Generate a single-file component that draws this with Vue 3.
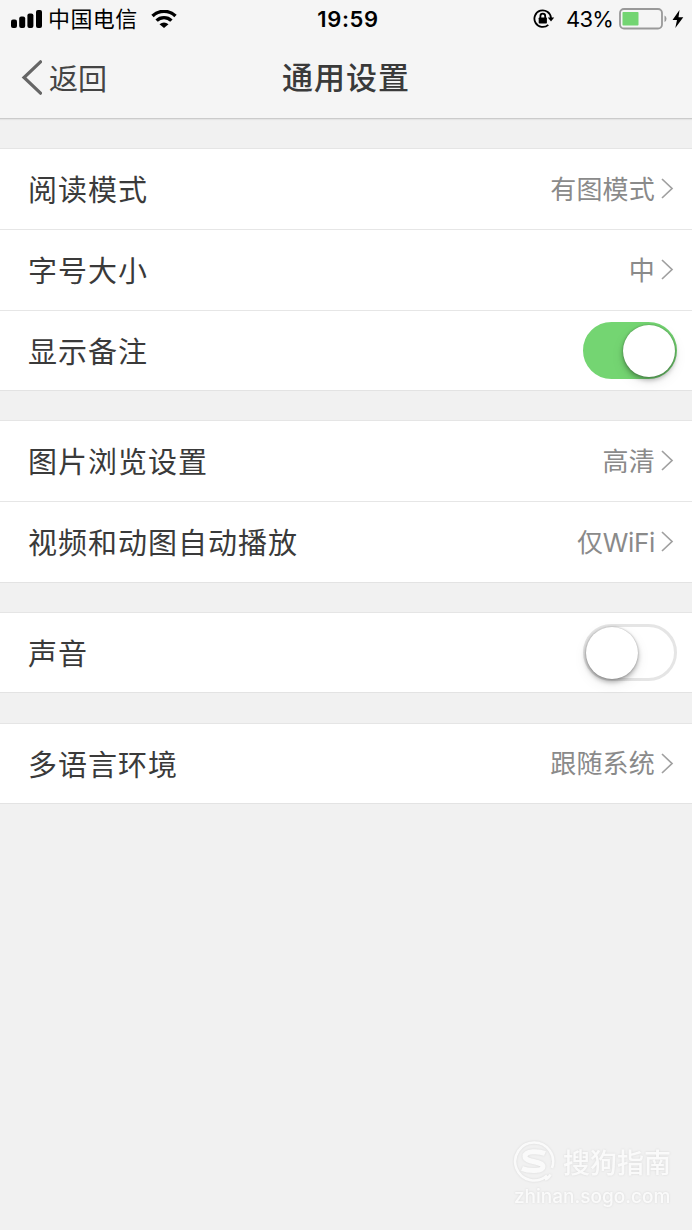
<script setup>
const groups = [
  {
    cls: 'g1',
    rows: [
      { label: '阅读模式', value: '有图模式' },
      { label: '字号大小', value: '中' },
      { label: '显示备注', toggle: true, on: true },
    ],
  },
  {
    cls: 'g2',
    rows: [
      { label: '图片浏览设置', value: '高清' },
      { label: '视频和动图自动播放', value: '仅WiFi', tight: true },
    ],
  },
  { cls: 'g3', rows: [{ label: '声音', toggle: true, on: false }] },
  { cls: 'g4', rows: [{ label: '多语言环境', value: '跟随系统' }] },
]
</script>

<template>
  <div class="screen">
    <header class="header">
      <div class="status">
        <div class="side">
          <svg class="signal" width="32" height="19" viewBox="0 0 32 19">
            <rect x="0" y="9.5" width="6" height="8.500" rx="2" />
            <rect x="8.200" y="6.500" width="6" height="11.500" rx="2" />
            <rect x="16.400" y="3.500" width="6" height="14.500" rx="2" />
            <rect x="25" y="0" width="6" height="18" rx="2" />
          </svg>
          <span class="carrier">中国电信</span>
          <svg class="wifi" width="26" height="19" viewBox="0 0 26 19">
            <path d="M1.500 6A16.500 16.500 0 0 1 24.500 6" />
            <path d="M5.600 10.600A10.600 10.600 0 0 1 20.400 10.600" />
            <path class="dot" d="M13 18L8.500 14.200Q13 10.600 17.500 14.200Z" />
          </svg>
        </div>
        <span class="time">19:59</span>
        <div class="side right">
          <svg class="lock" width="22" height="20" viewBox="0 0 22 20">
            <path class="ring" d="M18 9A8.300 8.300 0 1 0 15.300 15.800" />
            <path d="M14.800 8.500H21.200L18 12.600Z" />
            <rect x="5.700" y="8.500" width="8.200" height="6" rx="0.700" />
            <path class="shackle" d="M7.400 9V7A2.400 2.400 0 0 1 12.200 7V9" />
          </svg>
          <span class="percent">43%</span>
          <svg class="battery" width="48" height="22" viewBox="0 0 48 22">
            <rect class="shell" x="1" y="1" width="42" height="19.500" rx="4" />
            <rect class="charge" x="3.500" y="4" width="16" height="13.500" rx="0.800" />
            <path class="tip" d="M45.500 7.500Q47.500 8.300 47.500 10.700T45.500 14Z" />
          </svg>
          <svg class="bolt" width="12" height="18" viewBox="0 0 12 18">
            <path d="M7.500 0L0.500 10H5L3.300 18L11.300 7.200H6.500Z" />
          </svg>
        </div>
      </div>
      <nav class="nav">
        <div class="back">
          <svg width="22" height="36" viewBox="0 0 22 36">
            <path d="M20.500 1.800L4 17.500L20.500 33.200" />
          </svg>
          <span>返回</span>
        </div>
        <h1>通用设置</h1>
        <div></div>
      </nav>
    </header>

    <main>
      <section v-for="g in groups" :key="g.cls" class="group" :class="g.cls">
        <div v-for="r in g.rows" :key="r.label" class="row">
          <span class="label">{{ r.label }}</span>
          <span v-if="r.toggle" class="switch" :class="{ on: r.on }"><i></i></span>
          <span v-else class="value" :class="{ tight: r.tight }">
            <span>{{ r.value }}</span>
            <svg width="13" height="22" viewBox="0 0 13 22">
              <path d="M1 1L11 10.500L1 20" />
            </svg>
          </span>
        </div>
      </section>
    </main>

    <footer class="watermark">
      <div class="brand">
        <svg width="44" height="44" viewBox="0 0 44 44">
          <path class="thin" d="M35 35.500A19 19 0 1 1 40 28M33 39.500Q37 38 38.500 34.500" />
          <path class="swirl" d="M33 13.500C27 11 13 10.500 13 16.500S31 21 31 26.500S16 31 10 28.500" />
        </svg>
        <span>搜狗指南</span>
      </div>
      <div class="site">zhinan.sogo.com</div>
    </footer>
  </div>
</template>

<style>
body {
  background: #f1f1f1;
}
</style>

<style scoped>
.screen {
  box-sizing: border-box;
  width: 692px;
  height: 1230px;
  display: flex;
  flex-direction: column;
  overflow: hidden;
  background: #f1f1f1;
  color: #3a3a3a;
  font-family: "Noto Sans CJK SC", sans-serif;
}
.header {
  box-sizing: border-box;
  height: 119px;
  flex: none;
  background: #f5f5f5;
  border-bottom: 1px solid #cbcbcb;
  box-shadow: 0 1px 1px #e4e4e4;
}
.status {
  height: 38px;
  display: grid;
  grid-template-columns: 1fr auto 1fr;
  align-items: center;
  padding: 0 8px 0 11px;
  color: #000;
}
.side {
  display: flex;
  align-items: center;
}
.right {
  justify-content: flex-end;
}
.carrier {
  margin-left: 5px;
  padding-bottom: 3px;
  font-size: 22px;
  line-height: 35px;
  letter-spacing: 0.4px;
}
.wifi {
  margin-left: 13px;
}
.wifi path {
  fill: none;
  stroke: #000;
  stroke-width: 3.4;
}
.wifi .dot {
  fill: #000;
  stroke: none;
}
.time {
  padding-left: 1px;
  font: 600 22px/38px Inter, sans-serif;
  letter-spacing: 0.6px;
}
.ring,
.shackle {
  fill: none;
  stroke: #000;
  stroke-width: 1.8;
}
.percent {
  margin: 0 6px 0 11px;
  font: 400 22px/38px Inter, sans-serif;
  letter-spacing: -0.8px;
}
.shell {
  fill: none;
  stroke: #999;
  stroke-width: 1.8;
}
.charge {
  fill: #73d572;
}
.tip {
  fill: #999;
}
.bolt {
  margin-left: 5px;
}
.nav {
  height: 80px;
  display: grid;
  grid-template-columns: 1fr auto 1fr;
  align-items: center;
  padding: 0 20px;
}
.back {
  display: flex;
  align-items: center;
  font-size: 29px;
  line-height: 78px;
  color: #444;
}
.back span {
  margin-left: 7px;
  padding-bottom: 2px;
}
.back path {
  fill: none;
  stroke: #666;
  stroke-width: 3.2;
  stroke-linecap: round;
}
h1 {
  margin: 0;
  font-size: 31px;
  font-weight: 500;
  line-height: 76px;
  height: 80px;
  letter-spacing: 1px;
}
.group {
  background: #fff;
  border-top: 1px solid #e5e5e5;
  border-bottom: 1px solid #e3e3e3;
}
.g1,
.g2,
.g3 {
  margin-top: 29px;
}
.g4 {
  margin-top: 30px;
}
.row {
  box-sizing: border-box;
  height: 80px;
  display: flex;
  align-items: center;
  justify-content: space-between;
  padding: 0 15px 0 28px;
}
.g1 .row:last-child,
.g3 .row,
.g4 .row {
  height: 79px;
}
.row + .row {
  box-sizing: content-box;
  border-top: 1px solid #e6e6e6;
}
.label {
  padding-bottom: 2px;
  font-size: 29px;
  line-height: 77px;
  letter-spacing: 1px;
}
.g1 .row:last-child .label,
.g3 .label,
.g4 .label {
  padding-bottom: 0;
}
.value {
  display: flex;
  align-items: center;
  padding-right: 3px;
  font-family: Inter, "Noto Sans CJK SC", sans-serif;
  font-size: 26px;
  line-height: 77px;
  letter-spacing: 0.200px;
  color: #8a8a8a;
}
.tight {
  letter-spacing: -0.300px;
}
.value svg {
  margin-left: 6px;
}
.value path {
  fill: none;
  stroke: #a0a0a0;
  stroke-width: 1.700;
}
.switch {
  box-sizing: border-box;
  width: 94px;
  height: 57px;
  display: flex;
  align-items: center;
  padding: 0 1px;
  border: 3px solid #e5e5e5;
  border-radius: 29px;
  background: #fff;
}
.switch i {
  width: 52px;
  height: 52px;
  flex: none;
  margin-left: -1px;
  border-radius: 50%;
  background: #fff;
  box-shadow: 0 0 2px rgba(0, 0, 0, 0.3), 0 3px 5px rgba(0, 0, 0, 0.3), 0 5px 14px rgba(0, 0, 0, 0.08);
}
.switch.on {
  justify-content: flex-end;
  border: 2px solid #74d572;
  background: #74d572;
  padding: 0;
}
.watermark {
  margin-top: auto;
  align-self: flex-end;
  width: 180px;
  height: 90px;
  color: #fafafa;
  filter: drop-shadow(0 0 1px rgba(0, 0, 0, 0.1));
}
.brand {
  display: flex;
  align-items: center;
  height: 44px;
  font-size: 27px;
  font-weight: 500;
}
.brand span {
  margin-left: 7px;
  padding-bottom: 2px;
}
.brand path {
  fill: none;
  stroke: #fafafa;
}
.brand .thin {
  stroke-width: 2.500;
}
.brand .swirl {
  stroke-width: 5;
}
.site {
  padding-left: 2px;
  font: 500 19px/26px Inter, sans-serif;
}
</style>
